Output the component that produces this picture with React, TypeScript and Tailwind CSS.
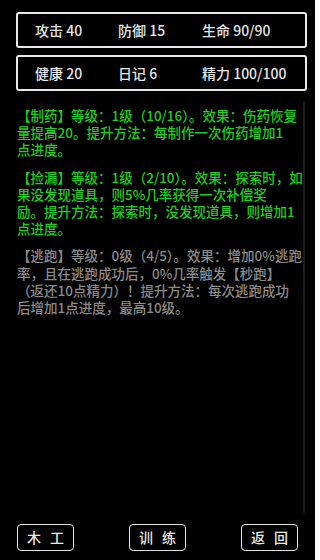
const stats = [
  [
    { label: "攻击", value: "40" },
    { label: "防御", value: "15" },
    { label: "生命", value: "90/90" },
  ],
  [
    { label: "健康", value: "20" },
    { label: "日记", value: "6" },
    { label: "精力", value: "100/100" },
  ],
]

// each skill is pre-split to keep the same line breaks as the game screen
const skills = [
  {
    active: true,
    lines: ["【制药】等级：1级（10/16）。效果：伤药恢复", "量提高20。提升方法：每制作一次伤药增加1", "点进度。"],
  },
  {
    active: true,
    lines: [
      "【捡漏】等级：1级（2/10）。效果：探索时，如",
      "果没发现道具，则5%几率获得一次补偿奖",
      "励。提升方法：探索时，没发现道具，则增加1",
      "点进度。",
    ],
  },
  {
    active: false,
    lines: [
      "【逃跑】等级：0级（4/5）。效果：增加0%逃跑",
      "率，且在逃跑成功后，0%几率触发【秒跑】",
      "（返还10点精力）！提升方法：每次逃跑成功",
      "后增加1点进度，最高10级。",
    ],
  },
]

const buttons = [
  ["木", "工"],
  ["训", "练"],
  ["返", "回"],
]

export default function App() {
  return (
    <div
      className="flex h-[560px] w-[315px] flex-col overflow-hidden bg-black font-medium"
      style={{ fontFamily: '"Noto Sans CJK SC", "Noto Sans", sans-serif' }}
    >
      <div className="ml-[16px] mt-[12px] flex w-[291px] flex-col gap-[7px]">
        {stats.map((row, i) => (
          <div
            key={i}
            className="grid h-[36px] grid-cols-[83px_84px_1fr] items-center rounded-[3px] border-2 border-[#e8e8e8] pl-[17px] text-[14px] text-[#e6e6e6]"
          >
            {row.map((s) => (
              <span key={s.label} className="whitespace-nowrap">
                {s.label} {s.value}
              </span>
            ))}
          </div>
        ))}
      </div>

      <div className="ml-[17px] mt-[10px] flex h-[412px] w-[288px]">
        <div className="flex flex-1 flex-col gap-[10px] pt-[6px]">
          {skills.map((skill, i) => (
            <div
              key={i}
              className={`text-[13.5px] leading-[17.2px] ${skill.active ? "text-[#22cc22]" : "text-[#8a8a8a]"}`}
            >
              {skill.lines.map((line) => (
                <div key={line} className="whitespace-nowrap">
                  {line}
                </div>
              ))}
            </div>
          ))}
        </div>
        <div className="w-[4px] rounded-[2px] bg-[#1c1c1c]" />
      </div>

      <div className="ml-[17px] mt-[11px] flex gap-[55px]">
        {buttons.map((b) => (
          <button
            key={b.join("")}
            className="flex h-[27px] w-[57px] items-center justify-center gap-[9px] rounded-[4px] border-[1.5px] border-[#e0e0e0] text-[14px] text-[#e8e8e8]"
          >
            <span>{b[0]}</span>
            <span>{b[1]}</span>
          </button>
        ))}
      </div>
    </div>
  )
}
